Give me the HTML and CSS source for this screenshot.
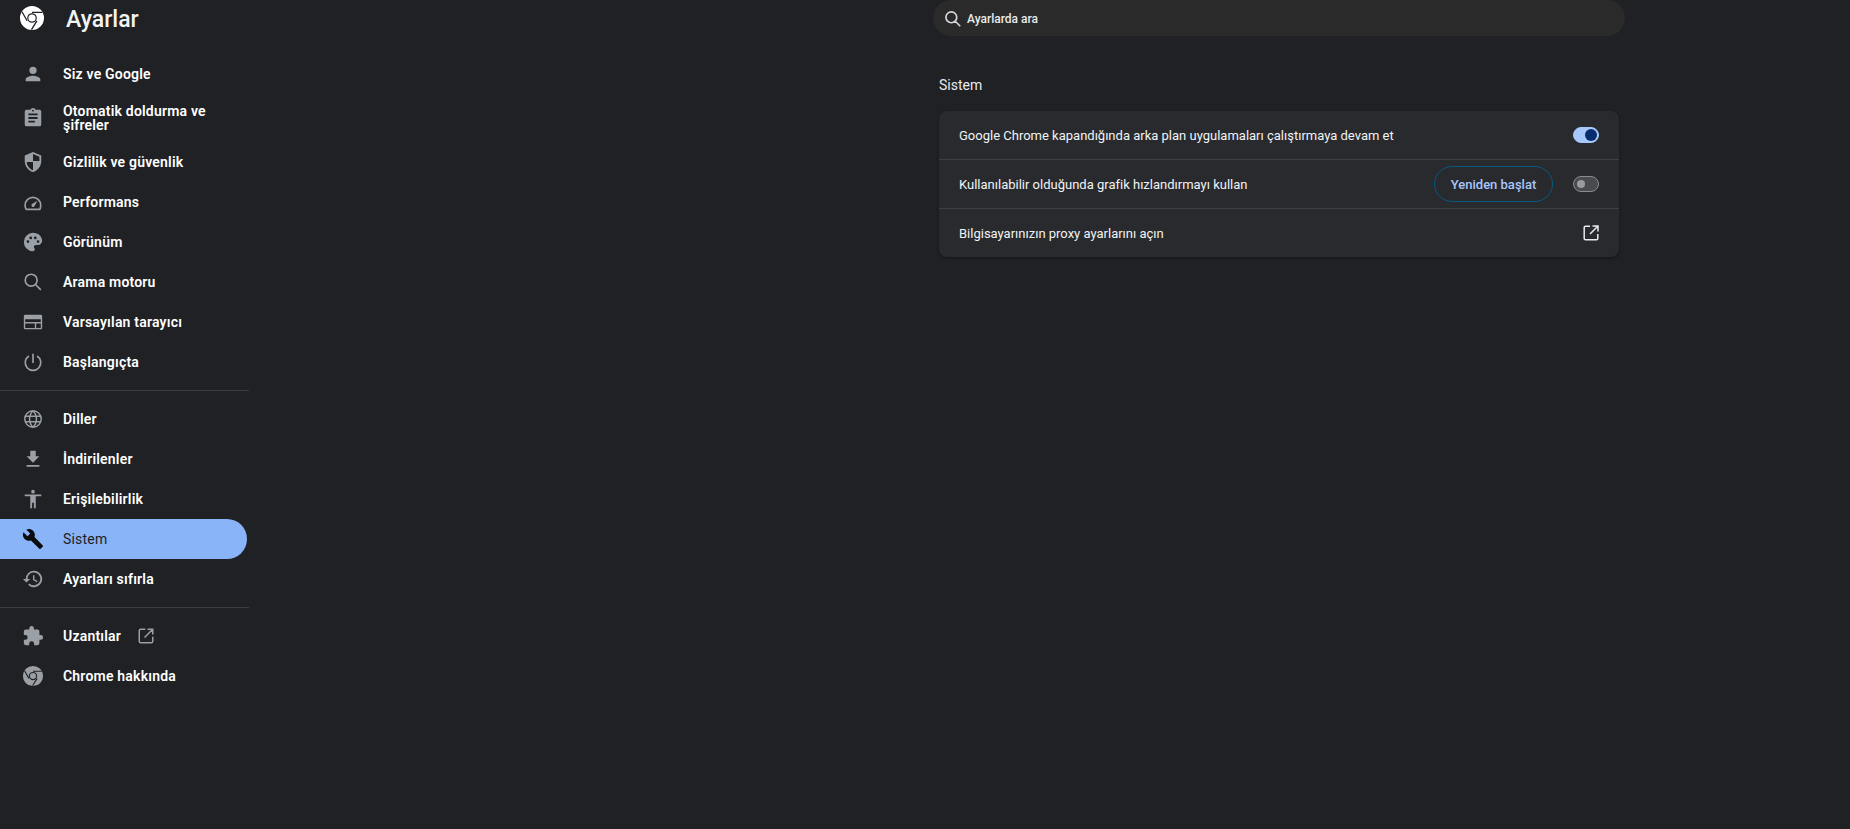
FILE: index.html
```html
<!DOCTYPE html>
<html lang="tr">
<head>
<meta charset="utf-8">
<title>Ayarlar</title>
<link rel="stylesheet" href="styles.css">
</head>
<body>
<div class="app">
  <aside class="side">
    <header class="brand">
      <svg class="logo" viewBox="0 0 24 24"><path fill="#fff" fill-rule="evenodd" d="M12 0a12 12 0 1 1 0 24a12 12 0 0 1 0-24zM12 7.200a4.800 4.800 0 1 0 0 9.600a4.800 4.800 0 0 0 0-9.600z"/><circle cx="12" cy="12" r="3.600" fill="#fff"/><path d="M12 6.400h10.400M7.100 14.800L2 5.800M16.900 14.800L11.500 23.600" stroke="#202124" stroke-width="1.300" fill="none"/></svg>
      <span class="brand-title">Ayarlar</span>
    </header>
    <nav class="nav">
      <a class="item"><svg class="ic" viewBox="0 0 24 24"><path d="M12 12a4 4 0 1 0 0-8a4 4 0 0 0 0 8zm0 2c-2.700 0-8 1.300-8 4v2h16v-2c0-2.700-5.300-4-8-4z"/></svg><span>Siz ve Google</span></a>
      <a class="item tall"><svg class="ic" viewBox="0 0 24 24"><path d="M19 3h-4.200C14.400 1.800 13.300 1 12 1s-2.400.8-2.800 2H5a2 2 0 0 0-2 2v14a2 2 0 0 0 2 2h14a2 2 0 0 0 2-2V5a2 2 0 0 0-2-2zm-7 0a1 1 0 1 1 0 2a1 1 0 0 1 0-2zm2 14H7v-2h7v2zm3-4H7v-2h10v2zm0-4H7V7h10v2z"/></svg><span>Otomatik doldurma ve şifreler</span></a>
      <a class="item"><svg class="ic" viewBox="0 0 24 24"><path fill-rule="evenodd" d="M12 1L3 5v6c0 5.600 3.800 10.700 9 12c5.200-1.300 9-6.400 9-12V5l-9-4zm0 2.200L19 6.300V11h-7v9.900c-3.800-1.100-6.500-5-7-8.900h7V3.200z"/></svg><span>Gizlilik ve güvenlik</span></a>
      <a class="item"><svg class="ic" viewBox="0 0 24 24"><path fill="none" stroke="currentColor" stroke-width="1.800" d="M4.600 20h14.800a9.300 9.300 0 0 0 1-4.500a8.500 8.500 0 0 0-17 0c0 1.600.4 3.200 1.200 4.500z"/><path d="M10.800 16.800a1.800 1.800 0 0 0 2.500 0L17 10.500l-6.200 3.800a1.800 1.800 0 0 0 0 2.500z"/></svg><span>Performans</span></a>
      <a class="item"><svg class="ic" viewBox="0 0 24 24"><path d="M12 2a10 10 0 0 0 0 20c1.100 0 2-.9 2-2c0-.5-.2-1-.5-1.300c-.3-.4-.5-.8-.5-1.300c0-1.100.9-2 2-2h2.400A5.600 5.600 0 0 0 22 10.800C22 5.900 17.500 2 12 2zM6.500 13a1.500 1.500 0 1 1 0-3a1.500 1.500 0 0 1 0 3zm3-4a1.500 1.500 0 1 1 0-3a1.500 1.500 0 0 1 0 3zm5 0a1.500 1.500 0 1 1 0-3a1.500 1.500 0 0 1 0 3zm3 4a1.500 1.500 0 1 1 0-3a1.500 1.500 0 0 1 0 3z"/></svg><span>Görünüm</span></a>
      <a class="item"><svg class="ic" viewBox="0 0 24 24"><path fill="none" stroke="currentColor" stroke-width="1.800" d="M10 3.500a6.500 6.500 0 1 1 0 13a6.500 6.500 0 0 1 0-13zM14.700 14.700l5.800 5.800"/></svg><span>Arama motoru</span></a>
      <a class="item"><svg class="ic" viewBox="0 0 24 24"><path fill-rule="evenodd" d="M3.500 4h17A1.500 1.500 0 0 1 22 5.500v13a1.500 1.500 0 0 1-1.500 1.500h-17A1.500 1.500 0 0 1 2 18.500v-13A1.500 1.500 0 0 1 3.500 4zM3.500 9v9.500H14v-5H3.500V12H20.500V9H3.500zm12 4.500v5h5v-5h-5z"/></svg><span>Varsayılan tarayıcı</span></a>
      <a class="item"><svg class="ic" viewBox="0 0 24 24"><path fill="none" stroke="currentColor" stroke-width="1.800" d="M12 3v10M7.500 5.500a8.500 8.500 0 1 0 9 0"/></svg><span>Başlangıçta</span></a>
      <hr class="sep">
      <a class="item"><svg class="ic" viewBox="0 0 24 24"><path fill="none" stroke="currentColor" stroke-width="1.600" d="M12 3a9 9 0 1 1 0 18a9 9 0 0 1 0-18zM12 3c-5 5-5 13 0 18M12 3c5 5 5 13 0 18M3.700 9h16.600M3.700 15h16.600"/></svg><span>Diller</span></a>
      <a class="item"><svg class="ic" viewBox="0 0 24 24"><path d="M19 9h-4V3H9v6H5l7 7l7-7zM5 18.500v2h14v-2H5z"/></svg><span>İndirilenler</span></a>
      <a class="item"><svg class="ic" viewBox="0 0 24 24"><path d="M12 2a2 2 0 1 1 0 4a2 2 0 0 1 0-4zM21 9h-6v13h-2v-6h-2v6H9V9H3V7h18v2z"/></svg><span>Erişilebilirlik</span></a>
      <a class="item active"><svg class="ic" viewBox="0 0 24 24"><path d="M22.700 19L13.600 9.900c.9-2.300.4-5-1.500-6.900C10.100 1 7.100.6 4.700 1.700L9 6L6 9L1.600 4.700C.4 7.100.9 10.100 2.900 12.100c1.900 1.900 4.600 2.400 6.900 1.500l9.100 9.100c.4.400 1 .4 1.400 0l2.300-2.300c.5-.4.500-1.100.1-1.400z"/></svg><span>Sistem</span></a>
      <a class="item"><svg class="ic" viewBox="0 0 24 24"><path d="M13 3a9 9 0 0 0-9 9H1l3.900 3.900L9 12H6a7 7 0 1 1 2.100 4.900l-1.400 1.500A9 9 0 1 0 13 3zm-1 5v5l4.300 2.500l.7-1.200l-3.500-2.100V8H12z"/></svg><span>Ayarları sıfırla</span></a>
      <hr class="sep">
      <a class="item"><svg class="ic" viewBox="0 0 24 24"><path d="M20.500 11H19V7a2 2 0 0 0-2-2h-4V3.500a2.500 2.500 0 0 0-5 0V5H4a2 2 0 0 0-2 2v3.800h1.500a2.700 2.700 0 0 1 0 5.400H2V20a2 2 0 0 0 2 2h3.800v-1.500a2.700 2.700 0 0 1 5.400 0V22H17a2 2 0 0 0 2-2v-4h1.500a2.500 2.500 0 0 0 0-5z"/></svg><span>Uzantılar</span><svg class="ext" viewBox="0 0 24 24"><path fill="none" stroke="currentColor" stroke-width="2" d="M11 3H5a2 2 0 0 0-2 2v14a2 2 0 0 0 2 2h14a2 2 0 0 0 2-2v-6M14 3h7v7M21 3L10 14"/></svg></a>
      <a class="item"><svg class="ic" viewBox="0 0 24 24"><path fill-rule="evenodd" d="M12 1a11 11 0 1 1 0 22a11 11 0 0 1 0-22zM12 7.500a4.500 4.500 0 1 0 0 9a4.500 4.500 0 0 0 0-9z"/><circle cx="12" cy="12" r="3.300"/><path d="M12 6.800h9.500M7.500 14.600L2.800 6.300M16.500 14.600L11.600 22.600" stroke="#202124" stroke-width="1.200" fill="none"/></svg><span>Chrome hakkında</span></a>
    </nav>
  </aside>
  <main class="main">
    <div class="search">
      <svg class="search-ic" viewBox="0 0 24 24"><path fill="none" stroke="currentColor" stroke-width="2" d="M10 3.500a6.500 6.500 0 1 1 0 13a6.500 6.500 0 0 1 0-13zM14.700 14.700l6 6"/></svg>
      <span>Ayarlarda ara</span>
    </div>
    <h2 class="heading">Sistem</h2>
    <section class="card">
      <div class="row"><span class="label">Google Chrome kapandığında arka plan uygulamaları çalıştırmaya devam et</span><span class="toggle on"></span></div>
      <div class="row"><span class="label">Kullanılabilir olduğunda grafik hızlandırmayı kullan</span><button class="btn">Yeniden başlat</button><span class="toggle"></span></div>
      <div class="row"><span class="label">Bilgisayarınızın proxy ayarlarını açın</span><svg class="open" viewBox="0 0 16 16"><path fill="none" stroke="currentColor" stroke-width="1.500" d="M7 1.200H2.500a1.300 1.300 0 0 0-1.300 1.300v11a1.300 1.300 0 0 0 1.300 1.300h11a1.300 1.300 0 0 0 1.300-1.300V9M9.500 1h5.500v5.500M15 1L7 9"/></svg></div>
    </section>
  </main>
</div>
</body>
</html>
```
FILE: styles.css
```css
* { box-sizing: border-box; }
html, body { margin: 0; height: 100%; overflow: hidden; }
body { background: #1f2125; color: #fff; font-family: Roboto, "Open Sans", sans-serif; font-size: 13px; }
.app { display: flex; height: 829px; }
.side { width: 256px; flex: none; }
.brand { display: flex; align-items: center; height: 38px; padding: 0 0 0 20px; }
.logo { width: 24px; height: 24px; margin-top: -3px; }
.brand-title { margin-left: 22px; font-size: 23px; font-weight: 500; color: #f1f3f4; }
.nav { padding-top: 16px; }
.item { display: flex; align-items: center; height: 40px; width: 247px; padding-left: 24px; font-size: 14px; font-weight: 600; letter-spacing: .2px; line-height: 14px; color: #fff; border-radius: 0 20px 20px 0; }
.item.tall { height: 48px; padding-right: 20px; }
.ic { width: 22px; height: 22px; flex: none; margin-left: -2px; margin-right: 19px; fill: #9aa0a6; color: #9aa0a6; }
.ext { width: 18px; height: 18px; margin-left: 16px; color: #9aa0a6; }
.active { background: #8ab4f8; color: #1f2125; font-weight: 400; }
.active .ic { fill: #0b0c0e; color: #0b0c0e; }
.sep { margin: 8px 7px 8px 0; height: 1px; border: 0; background: #3c3d40; }
.main { margin-left: 677px; width: 692px; }
.search { display: flex; align-items: center; height: 36px; padding-left: 10px; padding-top: 1px; background: #2a2a2a; border-radius: 18px; color: #e8eaed; font-size: 12px; font-weight: 500; }
.search-ic { width: 20px; height: 20px; margin-right: 4px; color: #d5d7da; }
.heading { margin: 39px 0 16px 6px; font-size: 14px; line-height: 20px; font-weight: 400; color: #e8eaed; }
.card { margin-left: 6px; width: 680px; background: #292a2e; border-radius: 8px; box-shadow: 0 1px 3px rgba(0,0,0,.4); }
.row { display: flex; align-items: center; height: 49px; padding: 0 20px; border-top: 1px solid #3f4043; }
.row:first-child { border-top: 0; height: 48px; }
.label { flex: 1; color: #f1f3f4; }
.toggle { position: relative; width: 26px; height: 16px; border-radius: 8px; background: #4a4b4e; border: 1px solid #8b8c8e; }
.toggle::after { content: ""; position: absolute; left: 3px; top: 3px; width: 8px; height: 8px; border-radius: 50%; background: #9a9b9d; }
.toggle.on { background: #a8c7fa; border-color: #a8c7fa; }
.toggle.on::after { left: 11px; top: 1px; width: 12px; height: 12px; background: #062e6f; }
.btn { width: 119px; height: 36px; margin-right: 20px; border: 1px solid #075a84; border-radius: 18px; background: transparent; color: #a8c7fa; font: 500 13px Roboto, sans-serif; }
.open { width: 16px; height: 16px; color: #e8eaed; }
```
